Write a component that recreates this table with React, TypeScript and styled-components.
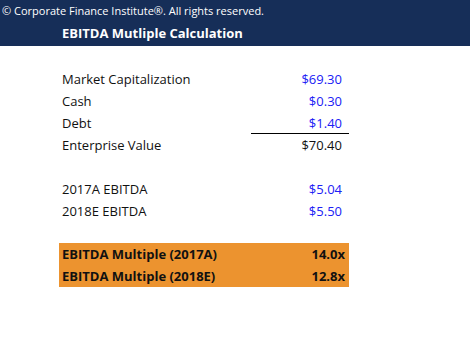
import React, { FunctionComponent } from 'react';
import styled, { createGlobalStyle } from 'styled-components';

const GlobalStyle = createGlobalStyle`
  html, body {
    margin: 0;
    padding: 0;
    background: #ffffff;
    font-family: "Open Sans", "Liberation Sans", sans-serif;
  }
`;

const Header = styled.div`
  background-color: #162e58;
  color: #ffffff;
  height: 46px;
  display: flex;
  flex-direction: column;
`;

const Copyright = styled.div`
  font-size: 11px;
  line-height: 22px;
  padding-left: 2px;
`;

const Title = styled.div`
  font-size: 13px;
  font-weight: 700;
  line-height: 22px;
  padding-left: 62px;
`;

const Sheet = styled.div`
  padding: 22px 0 0 59px;
  width: 290px;
`;

const Row = styled.div<{ $highlighted?: boolean }>`
  display: grid;
  grid-template-columns: 192px 98px;
  height: 22px;
  align-items: center;
  font-size: 13px;
  color: #111111;
  background-color: ${props => (props.$highlighted ? '#ec932f' : 'transparent')};
  font-weight: ${props => (props.$highlighted ? 700 : 400)};
`;

const Label = styled.div`
  padding-left: 3px;
  white-space: nowrap;
`;

const Value = styled.div<{ $input?: boolean; $underline?: boolean; $bold?: boolean }>`
  text-align: right;
  padding-right: ${props => (props.$bold ? '4px' : '7px')};
  height: 22px;
  line-height: 22px;
  box-sizing: border-box;
  color: ${props => (props.$input ? '#2020f5' : 'inherit')};
  border-bottom: ${props => (props.$underline ? '1px solid #000000' : 'none')};
`;

const Blank = styled.div<{ $short?: boolean }>`
  height: ${props => (props.$short ? '21px' : '22px')};
`;

type TLine = {
  label: string;
  value: string;
  input?: boolean;
  underline?: boolean;
  highlighted?: boolean;
};

const Line: FunctionComponent<TLine> = ({
  label,
  value,
  input,
  underline,
  highlighted,
}) => (
  <Row $highlighted={highlighted}>
    <Label>{label}</Label>
    <Value $input={input} $underline={underline} $bold={highlighted}>{value}</Value>
  </Row>
);

const App: FunctionComponent = () => (
  <>
    <GlobalStyle />
    <Header>
      <Copyright>© Corporate Finance Institute®. All rights reserved.</Copyright>
      <Title>EBITDA Mutliple Calculation</Title>
    </Header>
    <Sheet>
      <Line label="Market Capitalization" value="$69.30" input />
      <Line label="Cash" value="$0.30" input />
      <Line label="Debt" value="$1.40" input underline />
      <Line label="Enterprise Value" value="$70.40" />
      <Blank />
      <Line label="2017A EBITDA" value="$5.04" input />
      <Line label="2018E EBITDA" value="$5.50" input />
      <Blank $short />
      <Line label="EBITDA Multiple (2017A)" value="14.0x" highlighted />
      <Line label="EBITDA Multiple (2018E)" value="12.8x" highlighted />
    </Sheet>
  </>
);

export default App;
